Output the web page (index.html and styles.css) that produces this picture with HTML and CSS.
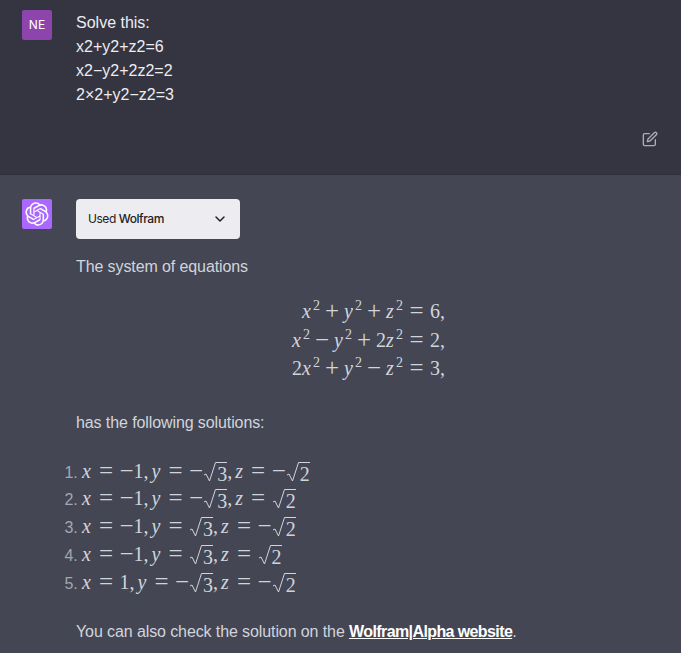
FILE: index.html
```html
<!DOCTYPE html>
<html lang="en">
<head>
  <meta charset="UTF-8">
  <title>Solve this</title>
  <meta name="viewport" content="width=device-width, initial-scale=1.0">
  <link rel="stylesheet" href="styles.css">
</head>
<body>

  <section class="turn turn-user">
    <div class="avatar avatar-user">NE</div>
    <div class="user-text">
      <p>Solve this:</p>
      <p>x2+y2+z2=6</p>
      <p>x2−y2+2z2=2</p>
      <p>2×2+y2−z2=3</p>
    </div>
    <button class="edit-btn" aria-label="Edit">
      <svg width="16" height="16" viewBox="0 0 24 24" fill="none" stroke="currentColor" stroke-width="2" stroke-linecap="round" stroke-linejoin="round">
        <path d="M11 4H4a2 2 0 0 0-2 2v14a2 2 0 0 0 2 2h14a2 2 0 0 0 2-2v-7"></path>
        <path d="M18.5 2.5a2.121 2.121 0 0 1 3 3L12 15l-4 1 1-4 9.500-9.500z"></path>
      </svg>
    </button>
  </section>

  <section class="turn turn-bot">
    <div class="avatar avatar-bot">
      <svg width="24" height="24" viewBox="0 0 41 41" fill="currentColor">
        <path d="M37.5324 16.8707C37.9808 15.5241 38.1363 14.0974 37.9886 12.6859C37.8409 11.2744 37.3934 9.91076 36.676 8.68622C35.6126 6.83404 33.9882 5.3676 32.0373 4.4985C30.0864 3.62941 27.9098 3.40259 25.8215 3.85078C24.8796 2.7893 23.7219 1.94125 22.4257 1.36341C21.1295 0.785575 19.7249 0.491269 18.3058 0.500197C16.1708 0.495044 14.0893 1.16803 12.3614 2.42214C10.6335 3.67624 9.34853 5.44666 8.6917 7.47815C7.30085 7.76286 5.98686 8.3414 4.8377 9.17505C3.68854 10.0087 2.73073 11.0782 2.02839 12.312C0.956464 14.1591 0.498905 16.2988 0.721698 18.4228C0.944492 20.5467 1.83612 22.5449 3.268 24.1293C2.81966 25.4759 2.66413 26.9026 2.81182 28.3141C2.95951 29.7256 3.40701 31.0892 4.12437 32.3138C5.18791 34.1659 6.8123 35.6322 8.76321 36.5013C10.7141 37.3704 12.8907 37.5973 14.9789 37.1492C15.9208 38.2107 17.0786 39.0587 18.3747 39.6366C19.6709 40.2144 21.0755 40.5087 22.4946 40.4998C24.6307 40.5054 26.7133 39.8321 28.4418 38.5772C30.1704 37.3223 31.4556 35.5506 32.1119 33.5179C33.5027 33.2332 34.8167 32.6547 35.9659 31.821C37.115 30.9874 38.0728 29.9178 38.7752 28.684C39.8458 26.8371 40.3023 24.6979 40.0789 22.5748C39.8556 20.4517 38.9639 18.4544 37.5324 16.8707ZM22.4978 37.8849C20.7443 37.8874 19.0459 37.2733 17.6994 36.1501C17.7601 36.117 17.8666 36.0586 17.936 36.0161L25.9004 31.4156C26.1003 31.3019 26.2663 31.137 26.3813 30.9378C26.4964 30.7386 26.5563 30.5124 26.5549 30.2825V19.0542L29.9213 20.998C29.9389 21.0068 29.9541 21.0198 29.9656 21.0359C29.977 21.052 29.9842 21.0707 29.9867 21.0902V30.3889C29.9842 32.375 29.1946 34.2791 27.7909 35.6841C26.3872 37.0892 24.4838 37.8806 22.4978 37.8849ZM6.39227 31.0064C5.51397 29.4888 5.19742 27.7107 5.49804 25.9832C5.55718 26.0187 5.66048 26.0818 5.73461 26.1244L13.699 30.7248C13.8975 30.8408 14.1233 30.902 14.3532 30.902C14.583 30.902 14.8088 30.8408 15.0073 30.7248L24.731 25.1103V28.9979C24.7321 29.0177 24.7283 29.0376 24.7199 29.0556C24.7115 29.0736 24.6988 29.0893 24.6829 29.1012L16.6317 33.7497C14.9096 34.7416 12.8643 35.0097 10.9447 34.4954C9.02506 33.9811 7.38785 32.7263 6.39227 31.0064ZM4.29707 13.6194C5.17156 12.0998 6.55279 10.9364 8.19885 10.3327C8.19885 10.4013 8.19491 10.5228 8.19491 10.6071V19.808C8.19351 20.0378 8.25334 20.2638 8.36823 20.4629C8.48312 20.6619 8.64893 20.8267 8.84863 20.9404L18.5723 26.5542L15.206 28.4979C15.1894 28.5089 15.1703 28.5155 15.1505 28.5173C15.1307 28.5191 15.1107 28.516 15.0924 28.5082L7.04046 23.8557C5.32135 22.8601 4.06716 21.2235 3.55289 19.3046C3.03862 17.3858 3.30624 15.3413 4.29707 13.6194ZM31.955 20.0556L22.2312 14.4411L25.5976 12.4981C25.6142 12.4872 25.6333 12.4805 25.6531 12.4787C25.6729 12.4769 25.6928 12.4801 25.7111 12.4879L33.7631 17.1364C34.9967 17.849 36.0017 18.8982 36.6606 20.1613C37.3194 21.4244 37.6047 22.849 37.4832 24.2684C37.3617 25.6878 36.8382 27.0432 35.9743 28.1759C35.1103 29.3086 33.9415 30.1717 32.6047 30.6641C32.6047 30.5947 32.6047 30.4733 32.6047 30.3889V21.188C32.6066 20.9586 32.5474 20.7328 32.4332 20.5338C32.319 20.3348 32.154 20.1698 31.955 20.0556ZM35.3055 15.0128C35.2464 14.9765 35.1431 14.9142 35.069 14.8717L27.1045 10.2712C26.906 10.1554 26.6803 10.0943 26.4504 10.0943C26.2206 10.0943 25.9948 10.1554 25.7963 10.2712L16.0726 15.8858V11.9982C16.0715 11.9783 16.0753 11.9585 16.0837 11.9405C16.0921 11.9225 16.1048 11.9068 16.1207 11.8949L24.1719 7.25025C25.4053 6.53903 26.8158 6.19376 28.2383 6.25482C29.6608 6.31589 31.0364 6.78077 32.2044 7.59508C33.3723 8.40939 34.2842 9.53945 34.8334 10.8531C35.3826 12.1667 35.5464 13.6095 35.3055 15.0128ZM14.2424 21.9419L10.8752 19.9981C10.8576 19.9893 10.8423 19.9763 10.8309 19.9602C10.8195 19.9441 10.8122 19.9254 10.8098 19.9058V10.6071C10.8107 9.18295 11.2173 7.78848 11.9819 6.58696C12.7466 5.38544 13.8377 4.42659 15.1275 3.82264C16.4173 3.21869 17.8524 2.99464 19.2649 3.1767C20.6775 3.35876 22.0089 3.93941 23.1034 4.85067C23.0427 4.88379 22.937 4.94215 22.8668 4.98473L14.9024 9.58517C14.7025 9.69878 14.5366 9.86356 14.4215 10.0626C14.3065 10.2616 14.2466 10.4877 14.2479 10.7175L14.2424 21.9419ZM16.071 17.9991L20.4018 15.4978L24.7325 17.9975V22.9985L20.4018 25.4983L16.071 22.9985V17.9991Z"></path>
      </svg>
    </div>
    <div class="bot-body">
      <div class="plugin-pill">
        <span>Used <strong>Wolfram</strong></span>
        <svg class="chevron" width="12" height="12" viewBox="0 0 24 24" fill="none" stroke="currentColor" stroke-width="3" stroke-linecap="round" stroke-linejoin="round">
          <polyline points="4 8 12 16 20 8"></polyline>
        </svg>
      </div>

      <p class="intro">The system of equations</p>

      <div class="display-math">
        <div class="eq"><i>x</i><sup>2</sup><b>+</b><i>y</i><sup>2</sup><b>+</b><i>z</i><sup>2</sup><b class="rel">=</b>6<span class="comma">,</span></div>
        <div class="eq"><i>x</i><sup>2</sup><b>−</b><i>y</i><sup>2</sup><b>+</b>2<i>z</i><sup>2</sup><b class="rel">=</b>2<span class="comma">,</span></div>
        <div class="eq">2<i>x</i><sup>2</sup><b>+</b><i>y</i><sup>2</sup><b>−</b><i>z</i><sup>2</sup><b class="rel">=</b>3<span class="comma">,</span></div>
      </div>

      <p class="after-math">has the following solutions:</p>

      <ol class="solutions">
        <li><span class="math"><i>x</i><b class="rel">=</b><b class="neg">−</b>1<span class="comma">,</span><i>y</i><b class="rel">=</b><b class="neg">−</b><span class="sqrt"><svg width="15" height="21" viewBox="0 0 15 21" fill="none" stroke="currentColor"><path d="M1 13l2-1 3.500 7 6-18.500h3"></path></svg><span class="rad">3</span></span><span class="comma">,</span><i>z</i><b class="rel">=</b><b class="neg">−</b><span class="sqrt"><svg width="15" height="21" viewBox="0 0 15 21" fill="none" stroke="currentColor"><path d="M1 13l2-1 3.500 7 6-18.500h3"></path></svg><span class="rad">2</span></span></span></li>
        <li><span class="math"><i>x</i><b class="rel">=</b><b class="neg">−</b>1<span class="comma">,</span><i>y</i><b class="rel">=</b><b class="neg">−</b><span class="sqrt"><svg width="15" height="21" viewBox="0 0 15 21" fill="none" stroke="currentColor"><path d="M1 13l2-1 3.500 7 6-18.500h3"></path></svg><span class="rad">3</span></span><span class="comma">,</span><i>z</i><b class="rel">=</b><span class="sqrt"><svg width="15" height="21" viewBox="0 0 15 21" fill="none" stroke="currentColor"><path d="M1 13l2-1 3.500 7 6-18.500h3"></path></svg><span class="rad">2</span></span></span></li>
        <li><span class="math"><i>x</i><b class="rel">=</b><b class="neg">−</b>1<span class="comma">,</span><i>y</i><b class="rel">=</b><span class="sqrt"><svg width="15" height="21" viewBox="0 0 15 21" fill="none" stroke="currentColor"><path d="M1 13l2-1 3.500 7 6-18.500h3"></path></svg><span class="rad">3</span></span><span class="comma">,</span><i>z</i><b class="rel">=</b><b class="neg">−</b><span class="sqrt"><svg width="15" height="21" viewBox="0 0 15 21" fill="none" stroke="currentColor"><path d="M1 13l2-1 3.500 7 6-18.500h3"></path></svg><span class="rad">2</span></span></span></li>
        <li><span class="math"><i>x</i><b class="rel">=</b><b class="neg">−</b>1<span class="comma">,</span><i>y</i><b class="rel">=</b><span class="sqrt"><svg width="15" height="21" viewBox="0 0 15 21" fill="none" stroke="currentColor"><path d="M1 13l2-1 3.500 7 6-18.500h3"></path></svg><span class="rad">3</span></span><span class="comma">,</span><i>z</i><b class="rel">=</b><span class="sqrt"><svg width="15" height="21" viewBox="0 0 15 21" fill="none" stroke="currentColor"><path d="M1 13l2-1 3.500 7 6-18.500h3"></path></svg><span class="rad">2</span></span></span></li>
        <li><span class="math"><i>x</i><b class="rel">=</b>1<span class="comma">,</span><i>y</i><b class="rel">=</b><b class="neg">−</b><span class="sqrt"><svg width="15" height="21" viewBox="0 0 15 21" fill="none" stroke="currentColor"><path d="M1 13l2-1 3.500 7 6-18.500h3"></path></svg><span class="rad">3</span></span><span class="comma">,</span><i>z</i><b class="rel">=</b><b class="neg">−</b><span class="sqrt"><svg width="15" height="21" viewBox="0 0 15 21" fill="none" stroke="currentColor"><path d="M1 13l2-1 3.500 7 6-18.500h3"></path></svg><span class="rad">2</span></span></span></li>
      </ol>

      <p class="outro">You can also check the solution on the <a href="#">Wolfram|Alpha website</a>.</p>
    </div>
  </section>

</body>
</html>
```

FILE: styles.css
```css
:root {
  --bg-user: #343541;
  --bg-bot: #444654;
  --text-user: #ececf1;
  --text-bot: #d1d5db;
}

html, body {
  height: 100%;
}

body {
  margin: 0;
  overflow: hidden;
  background: var(--bg-bot);
  font-family: "Liberation Sans", Inter, sans-serif;
  font-size: 16px;
  line-height: 24px;
  letter-spacing: -0.1px;
}

p {
  margin: 0;
}

.turn {
  display: flex;
  gap: 24px;
  padding-left: 22px;
}

.turn-user {
  position: relative;
  height: 164px;
  padding-top: 10px;
  background: var(--bg-user);
  border-bottom: 1px solid #2e2f3a;
  color: var(--text-user);
}

.turn-bot {
  padding-top: 24px;
  color: var(--text-bot);
}

.avatar {
  flex: none;
  width: 30px;
  height: 30px;
  border-radius: 2px;
  display: flex;
  align-items: center;
  justify-content: center;
  color: #fff;
}

.avatar-user {
  background: #8e44ad;
  font-family: Inter, sans-serif;
  font-size: 12px;
  letter-spacing: 0;
}

.avatar-bot {
  background: #ab68ff;
}

.user-text {
  padding-top: 1px;
  letter-spacing: 0;
}

.edit-btn {
  position: absolute;
  top: 131px;
  right: 23px;
  padding: 0;
  border: none;
  background: none;
  color: #acacbe;
  display: flex;
}

.plugin-pill {
  width: 164px;
  height: 40px;
  box-sizing: border-box;
  padding: 0 14px 0 12px;
  display: flex;
  align-items: center;
  justify-content: space-between;
  background: #ececf1;
  border-radius: 4px;
  color: #202123;
  font-family: Inter, sans-serif;
  font-size: 12px;
  letter-spacing: -0.45px;
}

.plugin-pill strong {
  font-weight: 500;
}

.intro {
  margin-top: 16px;
}

.display-math {
  margin-top: 18px;
  width: 369px;
  font-family: "Liberation Serif", serif;
  font-size: 20px;
  letter-spacing: 0;
}

.eq {
  height: 28.500px;
  line-height: 28.500px;
  text-align: right;
  white-space: nowrap;
}

i {
  font-style: italic;
  letter-spacing: 2px;
}

b {
  font-weight: 400;
  font-size: 25px;
  line-height: 0;
  margin: 0 5px;
  vertical-align: -1px;
}

b.rel {
  margin: 0 6.500px;
}

b.neg {
  margin: 0;
}

.comma {
  margin-right: 3px;
}

.eq .comma {
  margin-right: 0;
}

.eq sup {
  font-size: 14px;
  line-height: 0;
  vertical-align: 8px;
}

.after-math {
  margin-top: 28px;
}

.solutions {
  margin: 23px 0 0;
  padding: 0 0 0 6px;
}

.solutions li {
  height: 27.800px;
  line-height: 27.800px;
}

.solutions li::marker {
  color: #a3a6b3;
}

.math {
  font-family: "Liberation Serif", serif;
  font-size: 20px;
  letter-spacing: 0;
  white-space: nowrap;
}

.math i {
  letter-spacing: 1.500px;
}

.sqrt {
  display: inline-flex;
  align-items: flex-end;
  height: 21px;
  vertical-align: -5px;
}

.sqrt svg {
  flex: none;
  margin-right: -1px;
}

.rad {
  border-top: 1px solid currentColor;
  height: 20px;
  line-height: 22px;
}

.outro {
  margin-top: 24px;
}

.outro a {
  color: #fff;
  font-weight: 700;
  letter-spacing: -0.6px;
  text-decoration: underline;
}
```
